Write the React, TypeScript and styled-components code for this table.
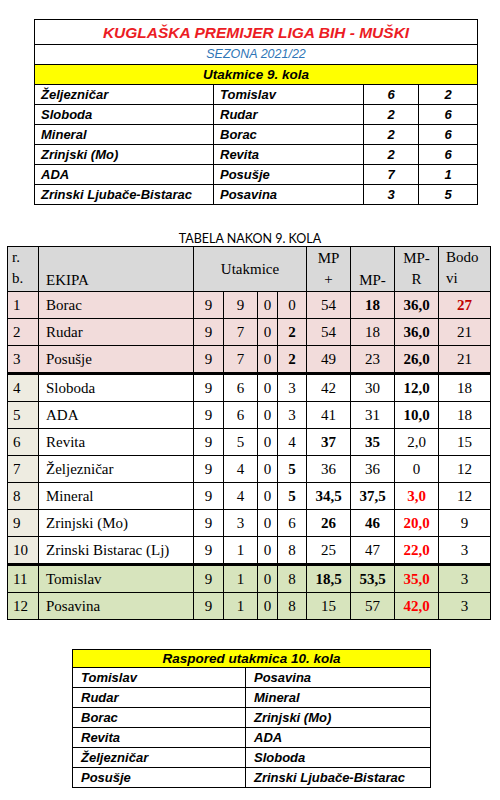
import React from 'react';
import styled, { createGlobalStyle } from 'styled-components';

const GlobalStyle = createGlobalStyle`
  html, body {
    margin: 0;
    padding: 0;
    background: #ffffff;
  }
`;

const Page = styled.div`
  width: 500px;
  height: 800px;
  display: flex;
  flex-direction: column;
  align-items: flex-start;
  padding-top: 19px;
  box-sizing: border-box;
  overflow: hidden;
`;

const calibri = `"Liberation Sans", Arial, sans-serif`;
const times = `"Liberation Serif", "Times New Roman", serif`;

const MatchTable = styled.table<{ $left: number; $width: number }>`
  margin-left: ${(p) => p.$left}px;
  width: ${(p) => p.$width}px;
  border-collapse: collapse;
  table-layout: fixed;
  font-family: ${calibri};
  font-style: italic;
  font-weight: 700;
  color: #000;

  td {
    border: 1px solid #000;
    padding: 0 0 0 6px;
    height: 19px;
    font-size: 13px;
    line-height: 19px;
    white-space: nowrap;
    overflow: hidden;
  }
`;

const TitleCell = styled.td`
  && {
    height: 24px;
    text-align: center;
    color: #ec1c24;
    font-size: 15.5px;
    padding: 0;
  }
`;

const SeasonCell = styled.td`
  && {
    text-align: center;
    color: #2e75b6;
    font-weight: 400;
    font-size: 12.5px;
    padding: 0;
  }
`;

const YellowCell = styled.td<{ $h?: number }>`
  && {
    text-align: center;
    background: #ffff00;
    font-size: 13.5px;
    padding: 0;
    height: ${(p) => p.$h || 19}px;
    line-height: ${(p) => p.$h || 19}px;
  }
`;

const ScoreCell = styled.td`
  && {
    text-align: center;
    padding: 0;
  }
`;

const Caption = styled.div`
  width: 500px;
  margin-top: 27px;
  text-align: center;
  font-family: Lato, ${calibri};
  font-size: 12.5px;
  line-height: 14px;
  color: #000;
`;

const Standings = styled.table`
  margin-left: 7px;
  width: 483px;
  border-collapse: collapse;
  table-layout: fixed;
  font-family: ${times};
  font-size: 15px;
  color: #000;
`;

const Head = styled.th<{ $align?: string; $valign?: string }>`
  background: #d9d9d9;
  border: 1px solid #000;
  height: 44px;
  padding: 0 4px;
  font-weight: 400;
  line-height: 21px;
  text-align: ${(p) => p.$align || 'center'};
  vertical-align: ${(p) => p.$valign || 'middle'};
`;

type Band = 'top' | 'mid' | 'low';

const bandColor: Record<Band, string> = {
  top: '#f2dcdb',
  mid: '#ffffff',
  low: '#d7e4bd',
};

const Row = styled.tr<{ $band: Band; $thick?: boolean }>`
  background: ${(p) => bandColor[p.$band]};

  td {
    border: 1px solid #000;
    ${(p) => (p.$thick ? 'border-top: 3px solid #000;' : '')}
    height: 26px;
    padding: 0;
    line-height: 20px;
    white-space: nowrap;
  }
`;

const RankCell = styled.td<{ $band: Band }>`
  && {
    padding-left: 5px;
    background: ${(p) => (p.$band === 'mid' ? '#eeece1' : 'transparent')};
  }
`;

const TeamCell = styled.td`
  && {
    padding-left: 7px;
  }
`;

type Tone = 'b' | 'r' | 'd' | undefined;

const NumCell = styled.td<{ $tone?: Tone }>`
  text-align: center;
  font-weight: ${(p) => (p.$tone ? 700 : 400)};
  color: ${(p) => (p.$tone === 'r' ? '#ff0000' : p.$tone === 'd' ? '#c00000' : '#000')};
`;

const Schedule = styled.table`
  margin-left: 72px;
  margin-top: 29px;
  width: 358px;
  border-collapse: collapse;
  table-layout: fixed;
  font-family: ${calibri};
  font-style: italic;
  font-weight: 700;
  font-size: 13px;
  color: #000;

  td {
    border: 1px solid #000;
    height: 19px;
    line-height: 19px;
    padding: 0 0 0 8px;
    white-space: nowrap;
  }
`;

const matches: [string, string, string, string][] = [
  ['Željezničar', 'Tomislav', '6', '2'],
  ['Sloboda', 'Rudar', '2', '6'],
  ['Mineral', 'Borac', '2', '6'],
  ['Zrinjski (Mo)', 'Revita', '2', '6'],
  ['ADA', 'Posušje', '7', '1'],
  ['Zrinski Ljubače-Bistarac', 'Posavina', '3', '5'],
];

// value with an optional tone: b = bold, r = bold red, d = bold dark red
type Val = string | [string, Tone];

const table: { team: string; vals: Val[] }[] = [
  { team: 'Borac', vals: ['9', '9', '0', '0', '54', ['18', 'b'], ['36,0', 'b'], ['27', 'd']] },
  { team: 'Rudar', vals: ['9', '7', '0', ['2', 'b'], '54', '18', ['36,0', 'b'], '21'] },
  { team: 'Posušje', vals: ['9', '7', '0', ['2', 'b'], '49', '23', ['26,0', 'b'], '21'] },
  { team: 'Sloboda', vals: ['9', '6', '0', '3', '42', '30', ['12,0', 'b'], '18'] },
  { team: 'ADA', vals: ['9', '6', '0', '3', '41', '31', ['10,0', 'b'], '18'] },
  { team: 'Revita', vals: ['9', '5', '0', '4', ['37', 'b'], ['35', 'b'], '2,0', '15'] },
  { team: 'Željezničar', vals: ['9', '4', '0', ['5', 'b'], '36', '36', '0', '12'] },
  { team: 'Mineral', vals: ['9', '4', '0', ['5', 'b'], ['34,5', 'b'], ['37,5', 'b'], ['3,0', 'r'], '12'] },
  { team: 'Zrinjski (Mo)', vals: ['9', '3', '0', '6', ['26', 'b'], ['46', 'b'], ['20,0', 'r'], '9'] },
  { team: 'Zrinski Bistarac (Lj)', vals: ['9', '1', '0', '8', '25', '47', ['22,0', 'r'], '3'] },
  { team: 'Tomislav', vals: ['9', '1', '0', '8', ['18,5', 'b'], ['53,5', 'b'], ['35,0', 'r'], '3'] },
  { team: 'Posavina', vals: ['9', '1', '0', '8', '15', '57', ['42,0', 'r'], '3'] },
];

const schedule: [string, string][] = [
  ['Tomislav', 'Posavina'],
  ['Rudar', 'Mineral'],
  ['Borac', 'Zrinjski (Mo)'],
  ['Revita', 'ADA'],
  ['Željezničar', 'Sloboda'],
  ['Posušje', 'Zrinski Ljubače-Bistarac'],
];

const colWidths = [31, 155, 30, 34, 20, 29, 44, 44, 44, 52];

function bandOf(i: number): Band {
  if (i < 3) return 'top';
  if (i < 10) return 'mid';
  return 'low';
}

export default function App() {
  return (
    <>
      <GlobalStyle />
      <Page>
        <MatchTable $left={34} $width={443}>
          <colgroup>
            <col style={{ width: 179 }} />
            <col style={{ width: 150 }} />
            <col style={{ width: 55 }} />
            <col style={{ width: 59 }} />
          </colgroup>
          <tbody>
            <tr>
              <TitleCell colSpan={4}>KUGLAŠKA PREMIJER LIGA BIH - MUŠKI</TitleCell>
            </tr>
            <tr>
              <SeasonCell colSpan={4}>SEZONA 2021/22</SeasonCell>
            </tr>
            <tr>
              <YellowCell colSpan={4}>Utakmice 9. kola</YellowCell>
            </tr>
            {matches.map((m) => (
              <tr key={m[0]}>
                <td>{m[0]}</td>
                <td>{m[1]}</td>
                <ScoreCell>{m[2]}</ScoreCell>
                <ScoreCell>{m[3]}</ScoreCell>
              </tr>
            ))}
          </tbody>
        </MatchTable>

        <Caption>TABELA NAKON 9. KOLA</Caption>

        <Standings>
          <colgroup>
            {colWidths.map((w, i) => (
              <col key={i} style={{ width: w }} />
            ))}
          </colgroup>
          <thead>
            <tr>
              <Head $align="left" $valign="top">
                r.
                <br />
                b.
              </Head>
              <Head $align="left" $valign="bottom" style={{ paddingLeft: 7 }}>
                EKIPA
              </Head>
              <Head colSpan={4}>Utakmice</Head>
              <Head>
                MP
                <br />+
              </Head>
              <Head $valign="bottom">MP-</Head>
              <Head>
                MP-
                <br />R
              </Head>
              <Head $align="left" $valign="top" style={{ paddingLeft: 7 }}>
                Bodo
                <br />
                vi
              </Head>
            </tr>
          </thead>
          <tbody>
            {table.map((r, i) => (
              <Row key={r.team} $band={bandOf(i)} $thick={i === 3 || i === 10}>
                <RankCell $band={bandOf(i)}>{i + 1}</RankCell>
                <TeamCell>{r.team}</TeamCell>
                {r.vals.map((v, j) =>
                  typeof v === 'string' ? (
                    <NumCell key={j}>{v}</NumCell>
                  ) : (
                    <NumCell key={j} $tone={v[1]}>
                      {v[0]}
                    </NumCell>
                  )
                )}
              </Row>
            ))}
          </tbody>
        </Standings>

        <Schedule>
          <colgroup>
            <col style={{ width: 173 }} />
            <col style={{ width: 185 }} />
          </colgroup>
          <tbody>
            <tr>
              <YellowCell colSpan={2} $h={17}>
                Raspored utakmica 10. kola
              </YellowCell>
            </tr>
            {schedule.map((s) => (
              <tr key={s[0]}>
                <td>{s[0]}</td>
                <td>{s[1]}</td>
              </tr>
            ))}
          </tbody>
        </Schedule>
      </Page>
    </>
  );
}
